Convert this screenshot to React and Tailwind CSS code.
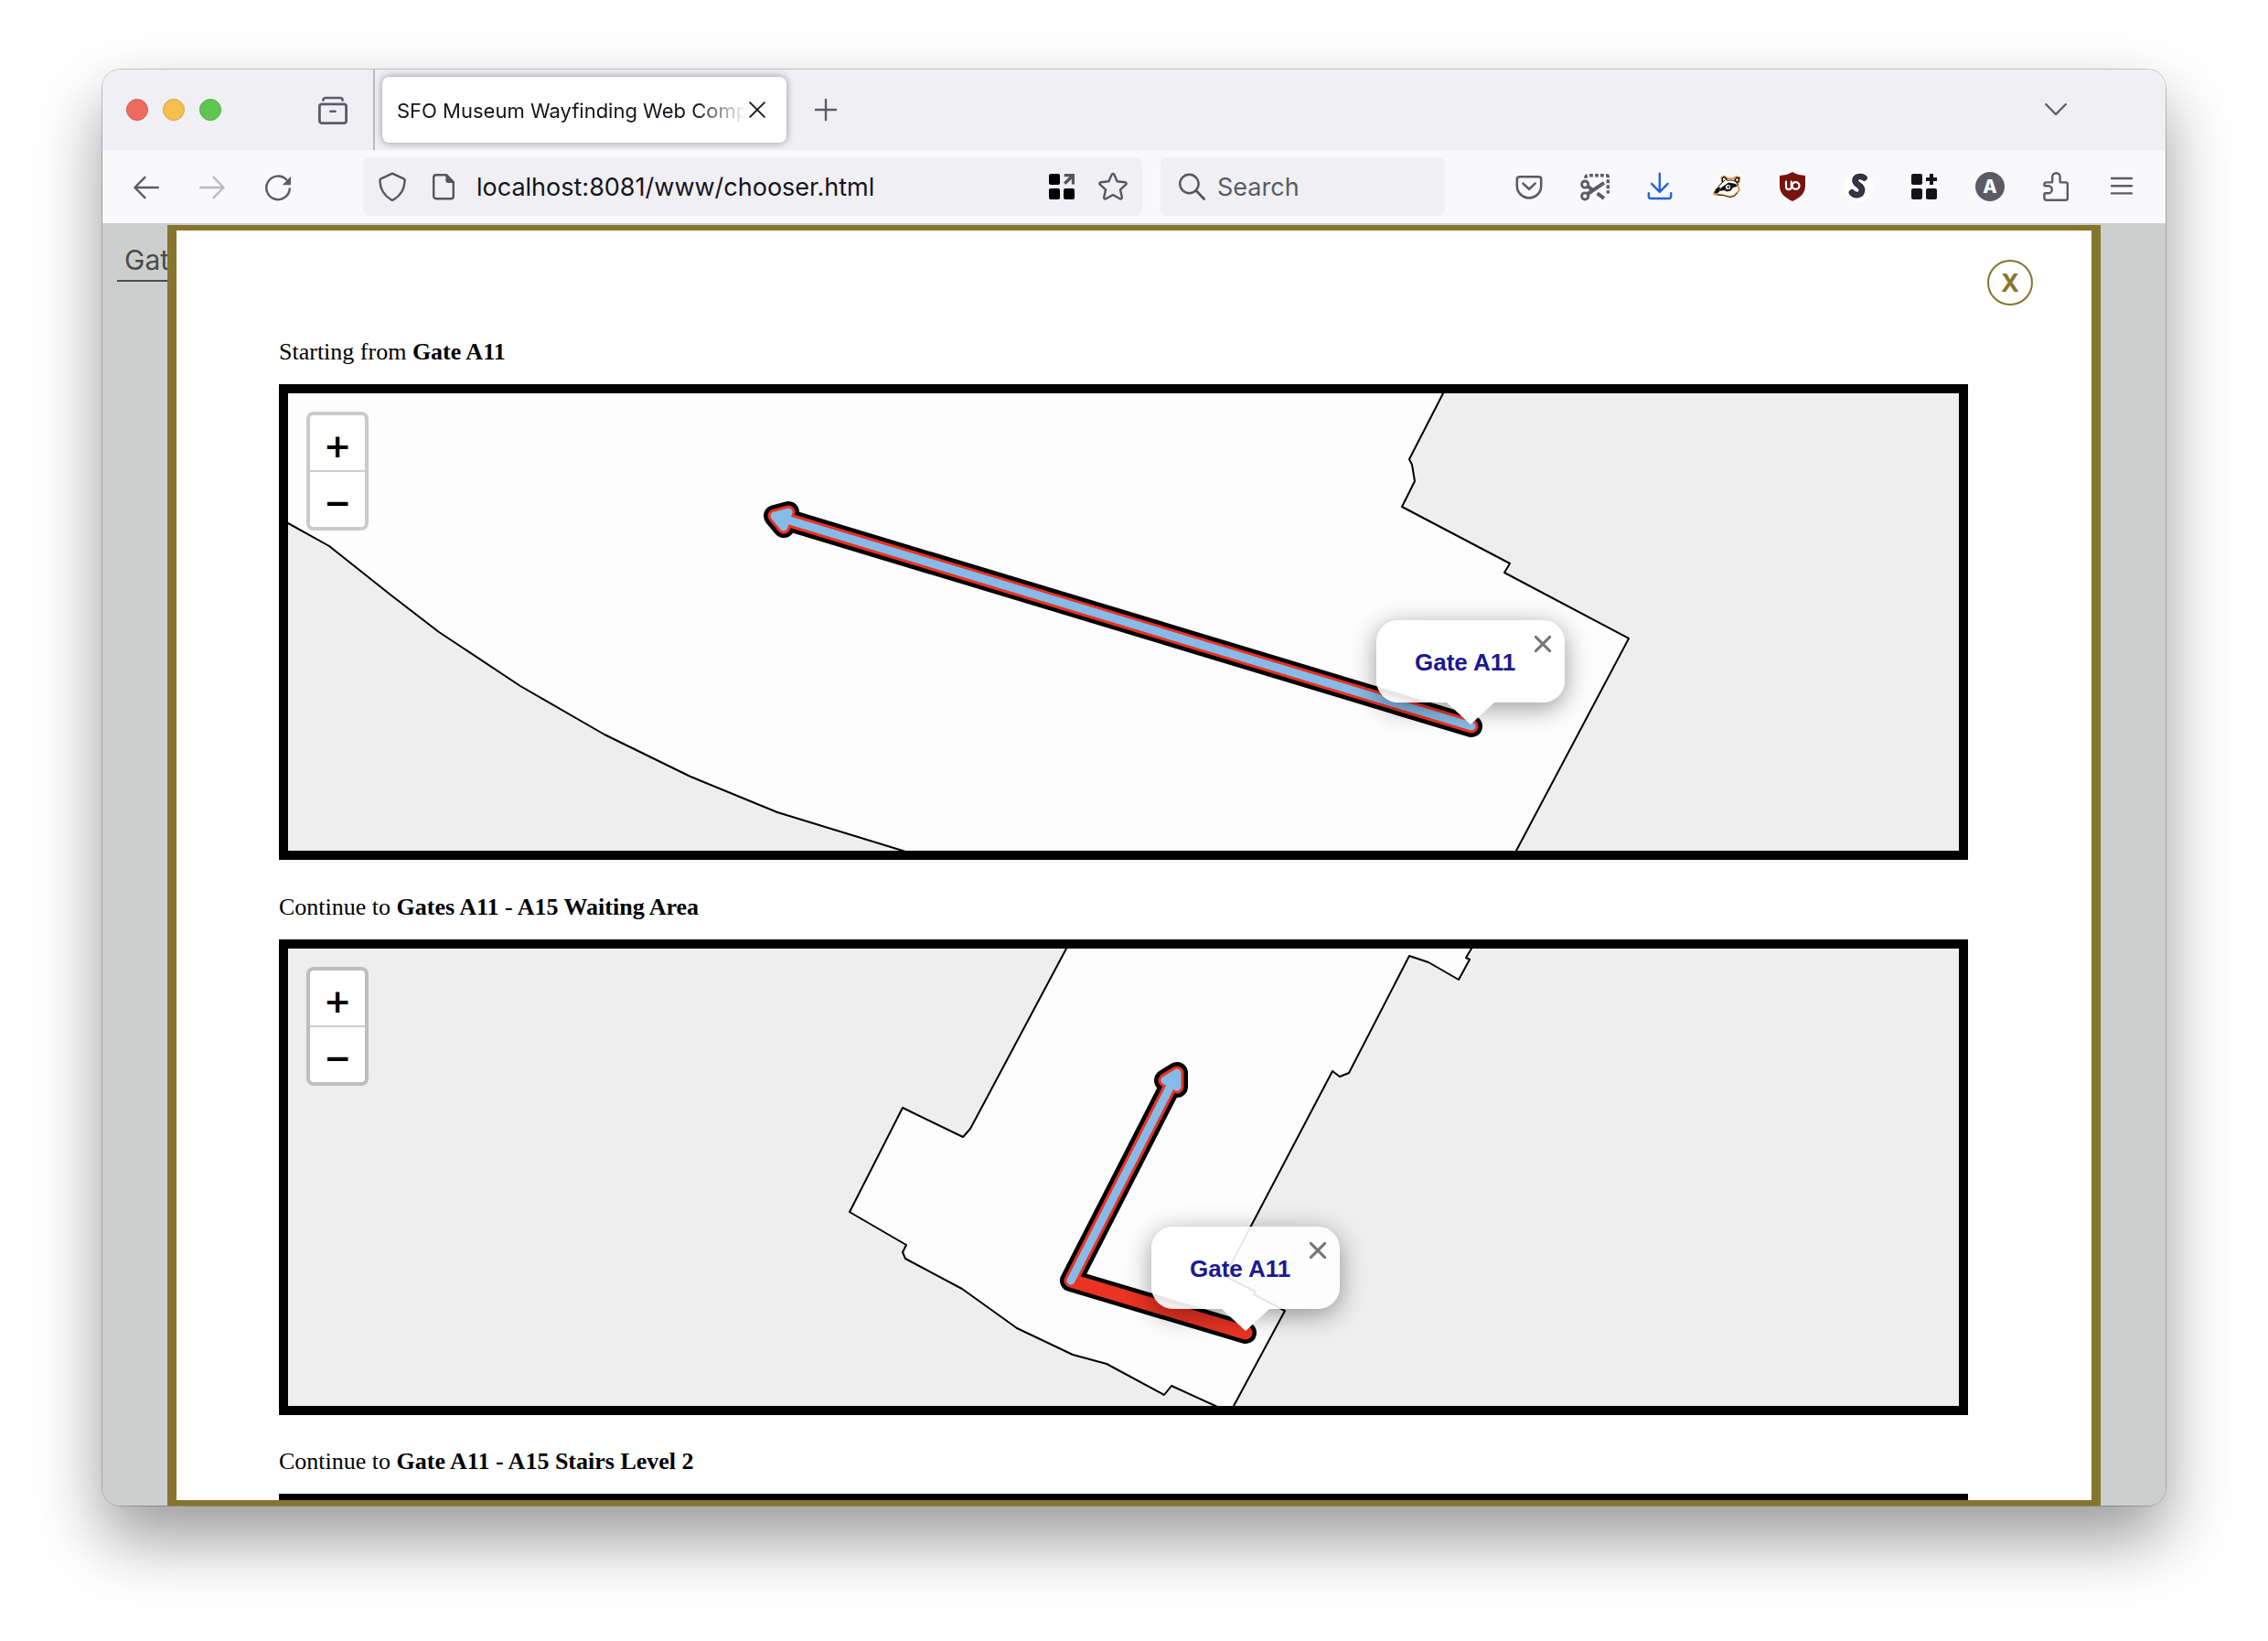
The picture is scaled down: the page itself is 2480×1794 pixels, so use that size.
import React from "react";

/* ---------- toolbar icons (16-unit grid, drawn at 32px) ---------- */

function Icon({ children, className = "text-[#5b5b66]", size = 32, box = 16 }) {
  return (
    <svg
      width={size}
      height={size}
      viewBox={`0 0 ${box} ${box}`}
      fill="none"
      stroke="currentColor"
      strokeWidth="1.2"
      strokeLinecap="round"
      strokeLinejoin="round"
      aria-hidden="true"
      className={`shrink-0 ${className}`}
    >
      {children}
    </svg>
  );
}

const FirefoxView = () => (
  <Icon>
    <path d="M2.700 2.800c0-.8.500-1.300 1.300-1.300h8c.8 0 1.300.5 1.300 1.300" strokeWidth="1.300" />
    <rect x=".7" y="4.900" width="14.600" height="10.400" rx="1.300" strokeWidth="1.400" />
    <path d="M6.700 8.900h2.600" strokeWidth="1.300" />
  </Icon>
);

const Back = () => (
  <Icon>
    <path d="M14.400 8.500H1.800M7.200 2.900 1.700 8.500l5.500 5.600" />
  </Icon>
);

const Forward = () => (
  <Icon className="text-[#bcbcc1]">
    <path d="M1.600 8.500h12.600M8.800 2.900l5.500 5.600-5.500 5.600" />
  </Icon>
);

const Reload = () => (
  <Icon>
    <path d="M14.400 9.200A6.400 6.400 0 1 1 12.600 4.200" />
    <path d="M15 2.400v4.200c0 .3-.2.500-.5.500h-4.100z" fill="currentColor" stroke="none" />
  </Icon>
);

const Shield = () => (
  <Icon className="text-[#56565f]">
    <path d="M8 .8 14.200 3.700c.5.300.7.700.6 1.200-.2 4.300-2.200 8-6.100 10.200-.4.300-1 .3-1.400 0C3.400 12.900 1.400 9.200 1.200 4.900c0-.5.200-1 .6-1.200z" />
  </Icon>
);

const PageIcon = () => (
  <Icon className="text-[#56565f]">
    <path d="M4 1.600h5.600l3.800 3.900v7.700c0 .8-.6 1.400-1.400 1.400H4c-.8 0-1.400-.6-1.400-1.400V3c0-.8.600-1.400 1.400-1.400z" />
    <path d="M9.200 1.400v3.500c0 .6.500 1.100 1.100 1.100h3.500z" fill="currentColor" stroke="none" />
  </Icon>
);

const ContainerOut = () => (
  <Icon className="text-black">
    <g fill="currentColor" stroke="none">
      <rect x="1" y="1" width="6" height="6" rx="1" />
      <rect x="1" y="9" width="6" height="6" rx="1" />
      <rect x="9" y="9" width="6" height="6" rx="1" />
    </g>
    <g stroke="#56565f" strokeLinecap="butt" strokeLinejoin="miter">
      <path d="M9.600 6.400 13.400 2.600" strokeWidth="1.700" />
      <path d="M9.400 1.800h4.800v4.900" strokeWidth="1.600" />
    </g>
  </Icon>
);

const Star = () => (
  <Icon className="text-[#56565f]">
    <path d="M7.400 1.300c.2-.5.900-.5 1.200 0l1.700 3.800 4.300.5c.7.100.9.800.5 1.200L12 9.700l.9 4.100c.1.700-.5 1.100-1.100.8L8 12.500l-3.800 2.100c-.6.300-1.200-.1-1.100-.8l.9-4.100L.9 6.800c-.4-.4-.2-1.100.5-1.200l4.300-.5z" />
  </Icon>
);

const Glass = () => (
  <Icon className="text-[#56565f]">
    <circle cx="6.700" cy="6.500" r="5.100" />
    <path d="m10.500 10.300 4.300 4.400" strokeWidth="1.400" />
  </Icon>
);

const Pocket = () => (
  <Icon>
    <path d="M2.800 2.600h10.400c.8 0 1.400.6 1.400 1.400v3.600a6.600 6.600 0 0 1-13.200 0V4c0-.8.600-1.400 1.400-1.400z" strokeWidth="1.300" />
    <path d="m4.700 6.300 3.300 3.100 3.300-3.100" strokeWidth="1.300" />
  </Icon>
);

const Scissors = () => (
  <Icon>
    <g strokeLinecap="butt">
      <path d="M2.900 3.400c0-1 .5-1.500 1.500-1.500h9.800c.6 0 1 .4 1 1v8.900" strokeWidth="1.800" strokeDasharray="1.900 1.100" />
      <circle cx="2.600" cy="6.800" r="1.800" strokeWidth="1.400" />
      <circle cx="2.600" cy="13.200" r="1.800" strokeWidth="1.400" />
      <path d="M4 12 13 5.900M4.300 8l3.200 2.400M9.300 11.700l3.700 2.700" strokeWidth="2" />
    </g>
  </Icon>
);

const Download = () => (
  <Icon className="text-[#2463e0]">
    <path d="M7.400 .8v10M3 6.400l4.400 4.500 4.400-4.500" />
    <path d="M1.400 11.600v1.700c0 .7.500 1.200 1.200 1.200h9.800c.7 0 1.200-.5 1.200-1.200v-1.700" />
  </Icon>
);

const Badger = () => (
  <Icon box={32}>
    <path
      d="M2 23 11 11.500 10.500 6l2.500-1.500 4 2.500 6 .5 3.500-2.500 4 1-1 5-1.500 3 1 3.500 1 2-2.500 3-3 3-5 1.500-8-2-9-.5z"
      fill="#fff"
      stroke="#ee8f3d"
      strokeWidth="1.800"
    />
    <path d="m11.500 11 -.3-4.200 2.300-1.300 2.800 2.700zM25 8.500l2.300-2.300 2.300.6-.8 3.800-1.800.7z" fill="#fff" stroke="#111" strokeWidth="1.400" />
    <path d="M14 10.500c3-1.800 7.500-2 11-.5 2 1 3 2.500 3 4.500" stroke="#222" strokeWidth="1" />
    <path d="m2.500 22.500 2-4 3-2 1.500 1-.5 3.500-2.500 2.500H3z" fill="#111" stroke="none" />
    <path d="m9.500 17.500 8.500-6 8 1.500 1.500 3-4.500 1-2.500 3.500-4 1-3.500-1.500-4.500 1z" fill="#111" stroke="none" />
    <path d="m7.500 16 7.500-7.500 3 2.500-8 5.500z" fill="#fff" stroke="none" />
    <path d="m7 16 5-5" stroke="#333" strokeWidth="1" />
    <circle cx="17.500" cy="16.500" r="2.600" fill="#fff" stroke="none" />
    <circle cx="17.800" cy="16.500" r="1.200" fill="#111" stroke="none" />
    <path d="m6 25 6.500.5 6.500 2 5.500-1 3-3.500" stroke="#222" strokeWidth="1" />
  </Icon>
);

const UBlock = () => (
  <Icon box={32}>
    <path d="M16 0c4.500 3 9 3.600 14 3.900V15c0 8.500-5.500 13-14 17C7.500 28 2 23.500 2 15V3.900C7 3.600 11.500 3 16 0z" fill="#77120c" stroke="none" />
    <g stroke="#fff" strokeWidth="2.200">
      <path d="M9 10.500v5.800a2.900 2.900 0 0 0 5.800 0v-5.800" />
      <circle cx="19.600" cy="15" r="3.900" />
    </g>
  </Icon>
);

const STYLUS_STROKE = "M22.500 6.500C19.500 4 13 4.500 12.500 9c-.3 5.500 8 5 7.500 11-.6 6-7.500 6.500-11 2.500";

const Stylus = () => (
  <Icon box={32}>
    <circle cx="16" cy="16" r="16" fill="#fff" stroke="none" />
    <path d={STYLUS_STROKE} stroke="#1c1b22" strokeWidth="6.600" />
    <path d={STYLUS_STROKE} stroke="#363748" strokeWidth="4.800" />
  </Icon>
);

const Containers = () => (
  <Icon className="text-[#15141a]">
    <g fill="currentColor" stroke="none">
      <rect x="1" y="1" width="6" height="6" rx="1" />
      <rect x="1" y="9" width="6" height="6" rx="1" />
      <rect x="9" y="9" width="6" height="6" rx="1" />
    </g>
    <path d="M12 1v6M9 4h6" strokeWidth="2" strokeLinecap="butt" />
  </Icon>
);

const Puzzle = () => (
  <Icon>
    <path d="M2.900 5.700h2.700c.3 0 .5-.2.500-.5V2.700a2.100 2.100 0 0 1 4.200 0v2.500c0 .3.200.5.500.5h2.600c.6 0 1 .4 1 1v7.700c0 .6-.4 1-1 1H2.700c-.6 0-1-.4-1-1v-2.300c0-.3.200-.5.500-.5h1.700a2 2 0 0 0 0-4H2.200a.5.500 0 0 1-.5-.5v-.4c0-.6.500-1 1.200-1z" />
  </Icon>
);

const Burger = () => (
  <Icon>
    <path d="M2.500 3.500h11M2.500 7.600h11M2.500 11.700h11" />
  </Icon>
);

const Cross = ({ size, width }) => (
  <svg width={size} height={size} viewBox="0 0 16 16" fill="none" stroke="currentColor" strokeWidth={width} strokeLinecap="round" aria-hidden="true">
    <path d="m1 1 14 14M15 1 1 15" />
  </svg>
);

function IconButton({ label, children }) {
  return (
    <button type="button" aria-label={label} className="flex size-8 shrink-0 items-center justify-center">
      {children}
    </button>
  );
}

/* ---------- browser chrome ---------- */

function TabStrip() {
  return (
    <div className="flex h-22 shrink-0 items-center bg-[#f0f0f4] pl-[26px]">
      <div className="flex gap-4">
        <button type="button" aria-label="Close window" className="size-6 rounded-full border border-[#d8574c] bg-[#ed6a5e]" />
        <button type="button" aria-label="Minimize window" className="size-6 rounded-full border border-[#dba33b] bg-[#f5bf4f]" />
        <button type="button" aria-label="Zoom window" className="size-6 rounded-full border border-[#50ae3d] bg-[#61c554]" />
      </div>
      <div className="ml-[106px] flex">
        <IconButton label="Recent browsing">
          <FirefoxView />
        </IconButton>
      </div>
      <div className="ml-7 w-0.5 self-stretch bg-[#b9b9c0]" />
      <div className="ml-2 flex h-18 w-[442px] items-center rounded-lg bg-white pr-5 pl-4 shadow-[0_0_8px_rgba(0,0,0,0.4)]">
        <span className="min-w-0 flex-1 overflow-hidden pt-0.5 text-[22px] leading-8 whitespace-nowrap text-[#15141a] [mask-image:linear-gradient(to_left,transparent,black_56px)]">
          SFO Museum Wayfinding Web Comp
        </span>
        <button type="button" aria-label="Close tab" className="flex size-6 shrink-0 items-center justify-center text-[#15141a]">
          <Cross size={18} width={1.6} />
        </button>
      </div>
      <button type="button" aria-label="New tab" className="ml-[27px] flex size-8 items-center justify-center">
        <Icon>
          <path d="M8 2.500v11M2.500 8h11" />
        </Icon>
      </button>
      <button type="button" aria-label="List all tabs" className="mr-[104px] ml-auto flex size-8 items-center justify-center">
        <Icon>
          <path d="m2.600 5 5.400 5.500L13.400 5" />
        </Icon>
      </button>
    </div>
  );
}

function Toolbar() {
  return (
    <div className="flex h-20 shrink-0 items-center bg-[#f9f9fb] px-8">
      <div className="flex gap-10">
        <IconButton label="Back"><Back /></IconButton>
        <IconButton label="Forward"><Forward /></IconButton>
        <IconButton label="Reload"><Reload /></IconButton>
      </div>
      <div className="ml-[77px] flex h-16 min-w-0 flex-1 items-center rounded-lg bg-[#f0f0f4] px-4">
        <IconButton label="Tracking protection"><Shield /></IconButton>
        <span className="ml-6 flex"><PageIcon /></span>
        <input
          aria-label="Address"
          defaultValue="localhost:8081/www/chooser.html"
          className="ml-5 min-w-0 flex-1 bg-transparent pt-0.5 text-[27px] text-[#15141a] outline-none"
        />
        <div className="flex gap-6">
          <IconButton label="Open in container"><ContainerOut /></IconButton>
          <IconButton label="Bookmark this page"><Star /></IconButton>
        </div>
      </div>
      <div className="ml-5 flex h-16 w-[311px] items-center gap-3 rounded-lg bg-[#f0f0f4] px-[18px]">
        <Glass />
        <input aria-label="Search" placeholder="Search" className="w-full min-w-0 bg-transparent pt-0.5 text-[27px] outline-none placeholder:text-[#5b5b66]" />
      </div>
      <div className="ml-[76px] flex gap-10">
        <IconButton label="Save to Pocket"><Pocket /></IconButton>
        <IconButton label="Screenshot"><Scissors /></IconButton>
        <IconButton label="Downloads"><Download /></IconButton>
        <IconButton label="Privacy Badger"><Badger /></IconButton>
        <IconButton label="uBlock Origin"><UBlock /></IconButton>
        <IconButton label="Stylus"><Stylus /></IconButton>
        <IconButton label="Containers"><Containers /></IconButton>
        <button type="button" aria-label="Account" className="flex size-8 items-center justify-center rounded-full bg-[#5b5b66] text-xl font-extrabold text-white">
          A
        </button>
        <IconButton label="Extensions"><Puzzle /></IconButton>
        <IconButton label="Menu"><Burger /></IconButton>
      </div>
    </div>
  );
}

/* ---------- maps ---------- */

function ZoomControl() {
  return (
    <div className="absolute top-5 left-5 flex w-17 flex-col overflow-hidden rounded-lg border-4 border-black/20 bg-white bg-clip-padding font-['DejaVu_Sans',sans-serif] text-[36px] leading-none font-bold text-black">
      <button type="button" aria-label="Zoom in" className="flex h-[62px] items-center justify-center border-b-2 border-[#ccc] pt-2">
        +
      </button>
      <button type="button" aria-label="Zoom out" className="flex h-15 items-center justify-center pt-2">
        −
      </button>
    </div>
  );
}

function Popup({ className }) {
  return (
    <div className={`absolute ${className}`}>
      <div className="relative flex h-[90px] w-[206px] items-center rounded-3xl bg-white/90 pt-0.5 pl-[42px] font-['Liberation_Sans',Arial,sans-serif] text-[26px] leading-8 font-bold text-[#1a1a8f] shadow-[0_6px_28px_rgba(0,0,0,0.4)]">
        Gate A11
        <button type="button" aria-label="Close popup" className="absolute top-3.5 right-3 flex size-6 items-center justify-center text-[#757575]">
          <Cross size={18} width={2.6} />
        </button>
      </div>
      <svg width="52" height="24" viewBox="0 0 52 24" className="relative mx-auto block" aria-hidden="true">
        <path d="M0 0h52L26 24z" fill="#fff" />
      </svg>
    </div>
  );
}

function MapFrame({ label, children, popup }) {
  return (
    <div className="relative h-[520px] overflow-hidden border-10 border-black bg-[#eee]">
      <svg role="img" aria-label={label} viewBox="0 0 1827 500" preserveAspectRatio="xMidYMid slice" className="block h-full w-full" fill="none" strokeLinecap="round" strokeLinejoin="round">
        {children}
      </svg>
      <ZoomControl />
      {popup}
    </div>
  );
}

/* A route line: black casing, red body, and a blue arrow over the active leg. */
function Route({ line, leg, head }) {
  return (
    <g>
      <path d={`${line}${head}`} stroke="#000" strokeWidth="24" />
      <path d={`${line}${head}`} stroke="#ea3323" strokeWidth="15" />
      <path d={leg} stroke="#86bbe9" strokeWidth="9" />
      <path d={head} stroke="#86bbe9" fill="#86bbe9" strokeWidth="9" />
    </g>
  );
}

function GateMap() {
  return (
    <MapFrame label="Route from Gate A11" popup={<Popup className="top-[248px] left-[1190px]" />}>
      <path
        d="M-20 131 0 142 45 167 113 221 165 261 254 320 346 373 440 419 535 458 672 500 720 516H1335L1343 500 1466 268 1330 196 1336 186 1218 124 1232 96 1229 78 1226 72 1263 0 1273 -20H-20z"
        fill="#fdfdfd"
        stroke="#000"
        strokeWidth="2"
      />
      <Route line="M1294 364 545 138" leg="M1294 364 545 138" head="M532 134 547 130 542 146z" />
    </MapFrame>
  );
}

function WaitingAreaMap() {
  return (
    <MapFrame label="Route to Gates A11 - A15 Waiting Area" popup={<Popup className="top-[304px] left-[944px]" />}>
      <path
        d="M862 -20 851 0 746 197 738 206 672 174 614 288 676 324 672 332 675 339 737 372 797 415 858 444 895 454 958 488 966 478 1014 500 1040 512 1028 512 1034 500 1090 396 1056 378 1058 375 1028 360 1031 353 1030 347 1142 134 1150 140 1160 136 1226 8 1247 15 1280 34 1292 12 1288 10 1294 0 1304 -20z"
        fill="#fdfdfd"
        stroke="#000"
        strokeWidth="2"
      />
      <Route line="M1047 420 856 363 966 148" leg="M856 363 966 148" head="M972 136 972 151 959 144z" />
    </MapFrame>
  );
}

function Caption({ lead, place, className }) {
  return (
    <p className={`mb-[19px] text-[26px] leading-8 text-black ${className}`}>
      {lead} <strong>{place}</strong>
    </p>
  );
}

function DirectionsDialog() {
  return (
    <section role="dialog" aria-label="Directions" className="relative mx-[71px] mt-0.5 flex-1 overflow-hidden border-x-10 border-y-6 border-[#86752d] bg-white font-['Liberation_Serif','Times_New_Roman',serif]">
      <div className="flex justify-end pt-8 pr-16">
        <button type="button" aria-label="Close directions" className="flex size-[50px] items-center justify-center rounded-full border-2 border-[#86752d] font-['Inter',sans-serif] text-[27px] leading-none font-bold text-[#86752d]">
          X
        </button>
      </div>
      <div className="pr-[135px] pl-28">
        <Caption lead="Starting from" place="Gate A11" className="mt-[35px]" />
        <GateMap />
        <Caption lead="Continue to" place="Gates A11 - A15 Waiting Area" className="mt-9" />
        <WaitingAreaMap />
        <Caption lead="Continue to" place="Gate A11 - A15 Stairs Level 2" className="mt-[35px]" />
        <div className="h-[520px] border-10 border-black bg-[#eee]" />
      </div>
    </section>
  );
}

export default function App() {
  return (
    <div className="flex h-screen flex-col overflow-hidden bg-white px-28 pt-19 pb-[148px] font-['Inter',sans-serif]">
      <main className="flex min-h-0 flex-1 flex-col overflow-hidden rounded-[20px] shadow-[0_0_0_1px_rgba(0,0,0,0.2),0_36px_72px_rgba(0,0,0,0.4)]">
        <TabStrip />
        <Toolbar />
        <div className="relative flex min-h-0 flex-1 flex-col bg-[#cdcfce]">
          <div className="absolute top-[18px] left-4 border-b-2 border-[#4a4b4b] pl-2 text-[30px] leading-11 text-[#4a4b4b]">
            Gat
          </div>
          <DirectionsDialog />
        </div>
      </main>
    </div>
  );
}
